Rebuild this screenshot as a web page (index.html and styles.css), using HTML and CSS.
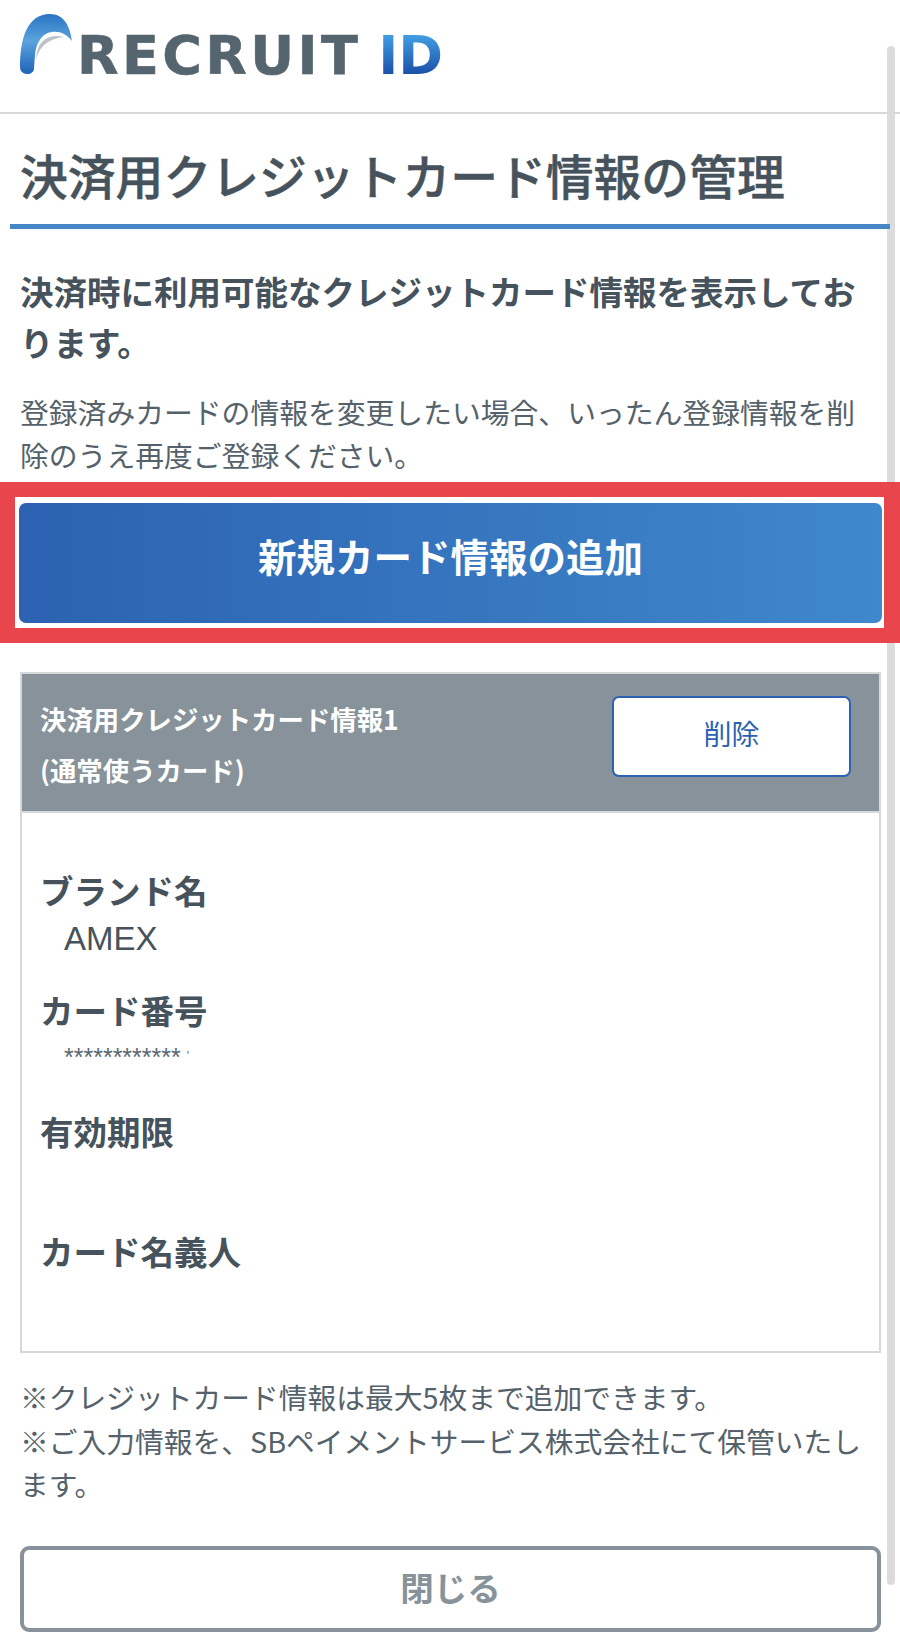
FILE: index.html
```html
<!DOCTYPE html>
<html lang="ja">
<head>
<meta charset="utf-8">
<title>決済用クレジットカード情報の管理</title>
<link rel="stylesheet" href="styles.css">
</head>
<body>
<div class="scrollbar"></div>
<header class="site-header">
  <div class="logo">
    <svg class="logo-mark" width="56" height="64" viewBox="0 0 56 64" aria-hidden="true">
      <defs>
        <linearGradient id="arc" x1="0" y1="0" x2="0" y2="1">
          <stop offset="0" stop-color="#2a74c4"/>
          <stop offset="0.45" stop-color="#5ba4dc"/>
          <stop offset="1" stop-color="#1f62b8"/>
        </linearGradient>
      </defs>
      <path d="M17 48 C19 36 27 26 45 24 C34 21 25 24 20 33 C18 38 17 43 17 48 Z" fill="#bcc2c6"/>
      <path d="M1 54 C1 26 8 1 31 1 C44 1 51 12 53 28 C47 21 41 18 33 19 C23 20 17 30 16 42 L15 55 C15 59 12 61 8 61 C4 61 1 58 1 54 Z" fill="url(#arc)"/>
    </svg>
    <span class="logo-word">RECRUIT</span>
    <span class="logo-id">ID</span>
  </div>
</header>
<main>
  <h1 class="page-title">決済用クレジットカード情報の管理</h1>
  <h2 class="lead">決済時に利用可能なクレジットカード情報を表示しております。</h2>
  <p class="desc">登録済みカードの情報を変更したい場合、いったん登録情報を削除のうえ再度ご登録ください。</p>
  <div class="highlight">
    <a class="add-button">新規カード情報の追加</a>
  </div>
  <section class="card">
    <div class="card-head">
      <div class="card-title">決済用クレジットカード情報1<br>(通常使うカード)</div>
      <a class="delete-button">削除</a>
    </div>
    <dl class="card-body">
      <dt>ブランド名</dt>
      <dd class="value-text">AMEX</dd>
      <dt>カード番号</dt>
      <dd class="value-number">************<span class="tick">'</span></dd>
      <dt>有効期限</dt>
      <dd></dd>
      <dt>カード名義人</dt>
      <dd></dd>
    </dl>
  </section>
  <div class="notes">
    <p>※クレジットカード情報は最大5枚まで追加できます。</p>
    <p>※ご入力情報を、SBペイメントサービス株式会社にて保管いたします。</p>
  </div>
  <a class="close-button">閉じる</a>
</main>
</body>
</html>
```
FILE: styles.css
```css
* { box-sizing: border-box; }
html { margin: 0; padding: 0; background: #fff; height: 1651px; overflow: hidden; }
body {
  margin: 0;
  padding: 0;
  font-family: "Noto Sans CJK JP", "Noto Sans", sans-serif;
  color: #46535c;
  width: 900px;
  height: 1651px;
  position: relative;
}
.scrollbar {
  position: absolute;
  z-index: -1;
  top: 46px;
  left: 887px;
  width: 8px;
  height: 1539px;
  border-radius: 4px;
  background: #dcdcdc;
}
.site-header {
  height: 114px;
  border-bottom: 2px solid #d8d8d8;
  padding: 13px 0 0 19px;
}
.logo {
  display: flex;
  align-items: flex-start;
  filter: blur(0.6px);
}
.logo-mark { flex: none; }
.logo-word {
  margin: 12px 0 0 2px;
  font-family: "DejaVu Sans", sans-serif;
  font-weight: 700;
  font-size: 54px;
  line-height: 62px;
  letter-spacing: 3.4px;
  color: #55656f;
  -webkit-text-stroke: 0.6px #55656f;
}
.logo-id {
  margin: 12px 0 0 17px;
  font-family: "DejaVu Sans", sans-serif;
  font-weight: 700;
  font-size: 54px;
  line-height: 62px;
  background: linear-gradient(180deg, #3f9ae0 20%, #1a4fa8 80%);
  -webkit-background-clip: text;
  background-clip: text;
  color: transparent;
}
.page-title {
  margin: 0 10px;
  padding: 33px 0 21px 10px;
  border-bottom: 5px solid #4586c4;
  font-size: 47.8px;
  line-height: 56px;
  font-weight: 500;
  white-space: nowrap;
  -webkit-text-stroke: 0.5px #46535c;
}
.lead {
  margin: 36px 20px 0;
  width: 845px;
  font-size: 33.5px;
  line-height: 51px;
  font-weight: 700;
}
.desc {
  margin: 23px 20px 0;
  width: 845px;
  font-size: 28.8px;
  line-height: 43px;
  color: #55626b;
}
.highlight {
  margin-top: 6px;
  height: 161px;
  border: solid #e9454c;
  border-width: 15px 16px 15px 15px;
  padding: 6px 2px 5px 4px;
}
.add-button {
  display: flex;
  align-items: center;
  justify-content: center;
  height: 120px;
  padding-bottom: 16px;
  border-radius: 7px;
  background: linear-gradient(90deg, #2c62b1, #3f88cc);
  color: #fff;
  font-size: 38.5px;
  font-weight: 700;
}
.card {
  margin: 29px 19px 0 20px;
  border: 2px solid #d5d9dc;
}
.card-head {
  display: flex;
  justify-content: space-between;
  align-items: flex-start;
  height: 139px;
  padding: 19px 28px 0 18px;
  background: #87929a;
  border-bottom: 2px solid #d5d9dc;
}
.card-title {
  color: #fff;
  font-size: 26.4px;
  line-height: 51px;
  font-weight: 700;
}
.delete-button {
  display: flex;
  align-items: center;
  justify-content: center;
  width: 239px;
  height: 81px;
  margin-top: 3px;
  padding-bottom: 8px;
  border: 2px solid #2c62b1;
  border-radius: 7px;
  background: #fff;
  color: #2c62b1;
  font-size: 28px;
}
.card-body {
  margin: 0;
  padding: 52px 18px 33px;
}
.card-body dt {
  font-size: 33.5px;
  line-height: 50px;
  font-weight: 700;
}
.card-body dd {
  margin: 0 0 28px 24px;
  min-height: 42px;
  line-height: 42px;
}
.card-body dd:last-child { margin-bottom: 0; }
.card-body .value-text {
  font-family: "Liberation Sans", sans-serif;
  font-size: 33px;
  padding-top: 3px;
  margin-bottom: 25px;
}
.value-number {
  font-family: "Liberation Sans", sans-serif;
  font-size: 25px;
  color: #5a6770;
}
.tick { margin-left: 6px; font-size: 12px; vertical-align: 6px; }
.notes {
  margin: 22px 20px 0;
  width: 845px;
  font-size: 28.75px;
  line-height: 43.5px;
  color: #55626b;
}
.notes p { margin: 0; }
.close-button {
  display: flex;
  align-items: center;
  justify-content: center;
  height: 86px;
  margin: 40px 19px 0 20px;
  padding-bottom: 4px;
  border: 4.5px solid #87929a;
  border-radius: 9px;
  color: #87929a;
  font-size: 33.5px;
  font-weight: 700;
}
```
